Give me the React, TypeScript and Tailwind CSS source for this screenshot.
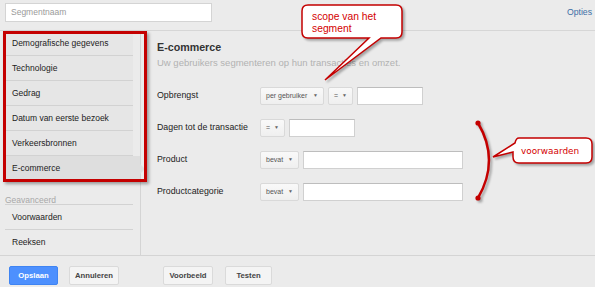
import React from 'react';

const sections = ['Demografische gegevens', 'Technologie', 'Gedrag', 'Datum van eerste bezoek', 'Verkeersbronnen', 'E-commerce'];
const advanced = ['Voorwaarden', 'Reeksen'];

function Select({ label, w }: { label: string; w: string }) {
  return (
    <div className={`${w} h-[18px] flex items-center justify-between px-[5px] bg-gradient-to-b from-[#f9f9f9] to-[#efefef] border border-[#d9d9d9] rounded-[2px] text-[7px] text-[#555]`}>
      <span>{label}</span>
      <span className="text-[5px] text-[#666]">▼</span>
    </div>
  );
}

function Field({ w }: { w: string }) {
  return <div className={`${w} h-[18px] bg-white border border-[#d0d0d0] border-t-[#bdbdbd]`} />;
}

function Row({ label, children }: { label: string; children: React.ReactNode }) {
  return (
    <div className="flex items-center h-[18px]">
      <div className="w-[103px] text-[8.8px] text-[#222]">{label}</div>
      <div className="flex items-center gap-[4px]">{children}</div>
    </div>
  );
}

function Button({ label, w, primary }: { label: string; w: string; primary?: boolean }) {
  return (
    <div
      className={`${w} h-[19px] flex items-center justify-center rounded-[2px] text-[7.7px] font-bold border ${
        primary ? 'bg-[#4d90fe] border-[#3f84f2] text-white' : 'bg-[#f4f4f4] border-[#dadada] text-[#444]'
      }`}
    >
      {label}
    </div>
  );
}

export default function App() {
  return (
    <div className="relative w-[595px] h-[287px] overflow-hidden bg-[#ebebeb] font-['Liberation_Sans',Arial,sans-serif]">
      {/* top bar */}
      <div className="h-[31px] flex items-start justify-between pt-[3px] pl-[5px] pr-[3px] border-b border-[#d6d6d6]">
        <div className="w-[207px] h-[19px] bg-white border border-[#d4d4d4] flex items-center pl-[5px] text-[8.5px] text-[#9a9a9a]">Segmentnaam</div>
        <div className="leading-[19px] text-[8.7px] text-[#3d6fa6]">Opties</div>
      </div>

      {/* middle */}
      <div className="flex h-[224px]">
        <div className="w-[141px] border-r border-[#d4d4d4] pl-[5px] pr-[7px]">
          {sections.map((s, i) => {
            const last = i === sections.length - 1;
            return (
              <div
                key={s}
                className={`relative h-[25px] flex items-center pl-[7px] text-[8.5px] text-[#222] ${
                  last ? 'bg-[#dedede] -mr-[7px]' : 'bg-[#e6e6e6] border-b border-[#d2d2d2]'
                }`}
              >
                {s}
                {last && (
                  <div className="absolute right-[-5px] top-[8px] w-0 h-0 border-y-[5px] border-y-transparent border-l-[5px] border-l-[#dedede]" />
                )}
              </div>
            );
          })}
          <div className="mt-[10px] h-[14px] pt-[4px] leading-[10px] border-b border-[#d2d2d2] text-[8.5px] text-[#a8a8a8]">Geavanceerd</div>
          {advanced.map((s, i) => (
            <div key={s} className={`h-[25px] flex items-center pl-[7px] text-[8.5px] text-[#222] ${i === 0 ? 'border-b border-[#d2d2d2]' : ''}`}>
              {s}
            </div>
          ))}
        </div>

        <div className="flex-1 pl-[16px] pt-[10px]">
          <div className="text-[10.7px] leading-[13px] font-bold text-[#333]">E-commerce</div>
          <div className="mt-[3px] text-[9.5px] leading-[12px] text-[#b2b2b2]">Uw gebruikers segmenteren op hun transacties en omzet.</div>
          <div className="mt-[18px] flex flex-col gap-[14px]">
            <Row label="Opbrengst">
              <Select label="per gebruiker" w="w-[64px]" />
              <Select label="=" w="w-[25px]" />
              <Field w="w-[66px]" />
            </Row>
            <Row label="Dagen tot de transactie">
              <Select label="=" w="w-[25px]" />
              <Field w="w-[66px]" />
            </Row>
            <Row label="Product">
              <Select label="bevat" w="w-[39px]" />
              <Field w="w-[160px]" />
            </Row>
            <Row label="Productcategorie">
              <Select label="bevat" w="w-[39px]" />
              <Field w="w-[160px]" />
            </Row>
          </div>
        </div>
      </div>

      {/* bottom bar */}
      <div className="h-[32px] border-t border-[#d4d4d4] flex items-start pt-[10px] pl-[9px]">
        <Button label="Opslaan" w="w-[49px]" primary />
        <div className="ml-[11px]"><Button label="Annuleren" w="w-[50px]" /></div>
        <div className="ml-[44px]"><Button label="Voorbeeld" w="w-[50px]" /></div>
        <div className="ml-[12px]"><Button label="Testen" w="w-[47px]" /></div>
      </div>

      {/* annotations */}
      <div className="absolute left-[3px] top-[31px] w-[144px] h-[151px] border-[3px] border-[#c40000] shadow-[2px_2px_3px_rgba(0,0,0,0.35)] pointer-events-none" />

      <svg className="absolute left-[295px] top-0 drop-shadow-[2px_2px_1px_rgba(0,0,0,0.3)]" width="115" height="85" viewBox="0 0 115 85">
        <path d="M13,5 H101 Q107,5 107,11 V32 Q107,38 101,38 H86 L30,80 L74,38 H13 Q7,38 7,32 V11 Q7,5 13,5 Z" fill="#fff" stroke="#c40000" strokeWidth="1.5" />
      </svg>
      <div className="absolute left-[312px] top-[11px] text-[10.3px] leading-[12px] text-[#d40000]">
        scope van het
        <br />
        segment
      </div>

      <svg className="absolute left-[470px] top-[115px] drop-shadow-[2px_2px_1px_rgba(0,0,0,0.3)]" width="125" height="95" viewBox="0 0 125 95">
        <path d="M8,8 Q30,45 8,83" fill="none" stroke="#c40000" strokeWidth="2.5" strokeLinecap="round" />
        <circle cx="8" cy="8" r="2.6" fill="#c40000" />
        <circle cx="8" cy="83" r="2.6" fill="#c40000" />
        <path d="M49,23 H116 Q122,23 122,29 V42 Q122,48 116,48 H49 Q43,48 43,42 V37 L23,42 L45,28 Q46,23 49,23 Z" fill="#fff" stroke="#c40000" strokeWidth="1.5" />
      </svg>
      <div className="absolute left-[521px] top-[145px] text-[8.9px] leading-[12px] text-[#d40000] font-['DejaVu_Sans',sans-serif]">voorwaarden</div>
    </div>
  );
}
